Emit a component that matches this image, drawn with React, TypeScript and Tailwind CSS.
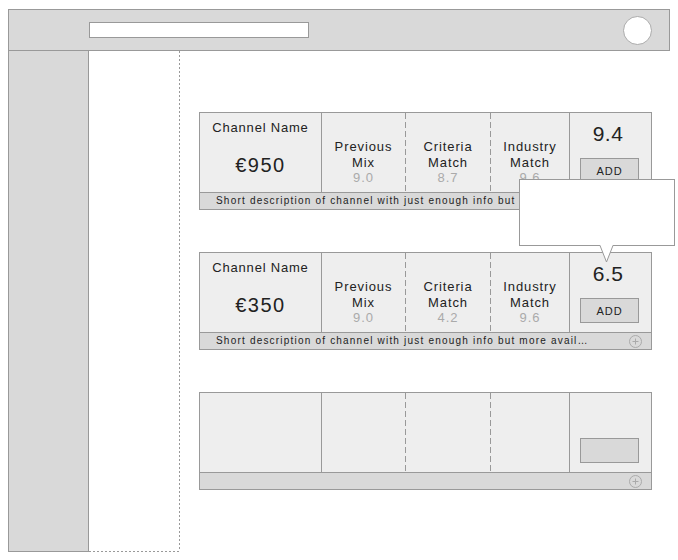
import React from "react";

const FONT = { fontFamily: '"Liberation Sans", Arial, sans-serif' };

function VDash() {
  return (
    <div className="w-px self-stretch bg-[linear-gradient(to_bottom,#999_6px,transparent_6px)] bg-[length:1px_9px]" />
  );
}

function Plus() {
  return (
    <svg width="13" height="13" viewBox="0 0 13 13" className="block">
      <circle cx="6.5" cy="6.5" r="6" fill="none" stroke="#aaa" strokeWidth="1" />
      <path d="M6.5 3.5v6M3.5 6.5h6" stroke="#aaa" strokeWidth="1" />
    </svg>
  );
}

type CardProps = {
  price?: string;
  vals?: [string, string, string];
  score?: string;
  empty?: boolean;
};

function Metric({ top, bottom, value }: { top: string; bottom: string; value: string }) {
  return (
    <div className="flex flex-col items-center pt-[26px] text-[13px] leading-[15.5px] tracking-[0.9px] text-[#222]">
      <span>{top}</span>
      <span>{bottom}</span>
      <span className="text-[#aaa]">{value}</span>
    </div>
  );
}

function Card({ price, vals, score, empty }: CardProps) {
  return (
    <div className="w-[453px] border border-[#999] bg-[#eeeeee]">
      <div className="flex h-[79px]">
        <div className="w-[121px] flex flex-col items-center text-[#222]">
          {!empty && (
            <>
              <span className="mt-[7px] text-[13px] leading-[16px] tracking-[0.8px]">Channel Name</span>
              <span className="mt-[17px] text-[20px] leading-[24px] tracking-[1.5px]">{price}</span>
            </>
          )}
        </div>
        <div className="w-px bg-[#999]" />
        <div className="w-[83px]">
          {!empty && vals && <Metric top="Previous" bottom="Mix" value={vals[0]} />}
        </div>
        <VDash />
        <div className="w-[84px]">
          {!empty && vals && <Metric top="Criteria" bottom="Match" value={vals[1]} />}
        </div>
        <VDash />
        <div className="w-[78px]">
          {!empty && vals && <Metric top="Industry" bottom="Match" value={vals[2]} />}
        </div>
        <div className="w-px bg-[#999]" />
        <div className="w-[81px] flex flex-col">
          <div className="h-[45px] flex justify-center pr-[5px]">
            {!empty && (
              <span className="mt-[9px] text-[21px] leading-[24px] tracking-[0.5px] text-[#222]">{score}</span>
            )}
          </div>
          <div className="ml-[10px] w-[59px] h-[25px] pt-[2px] border border-[#999] bg-[#d9d9d9] flex items-center justify-center text-[11px] tracking-[1px] text-[#222]">
            {!empty && "ADD"}
          </div>
        </div>
      </div>
      <div className="h-[17px] border-t border-[#999] bg-[#d9d9d9] flex items-center pl-[16px] pr-[9px]">
        <span className="text-[10px] leading-[16px] tracking-[1.2px] text-[#222] whitespace-nowrap">
          {!empty && "Short description of channel with just enough info but more avail…"}
        </span>
        <div className="ml-auto">
          <Plus />
        </div>
      </div>
    </div>
  );
}

export default function App() {
  return (
    <div className="relative w-[678px] h-[560px] bg-white pl-[8px] pt-[9px] overflow-hidden" style={FONT}>
      <div className="w-[662px] h-[42px] border border-[#999] bg-[#d9d9d9] flex items-center">
        <div className="ml-[80px] w-[220px] h-[16px] border border-[#999] bg-white" />
        <div className="ml-auto mr-[17px] w-[29px] h-[29px] rounded-full border border-[#aaa] bg-white" />
      </div>
      <div className="flex items-start">
        <div className="-mt-px w-[81px] h-[502px] border border-[#999] bg-[#d9d9d9]" />
        <div className="w-[91px] h-[501px] flex flex-col">
          <div className="flex-1 flex">
            <div className="flex-1" />
            <div className="w-px bg-[linear-gradient(to_bottom,#999_2px,transparent_2px)] bg-[length:1px_4px]" />
          </div>
          <div className="h-px bg-[linear-gradient(to_right,#999_2px,transparent_2px)] bg-[length:4px_1px]" />
        </div>
        <div className="ml-[19px] mt-[61px] flex flex-col gap-[42px]">
          <Card price="€950" vals={["9.0", "8.7", "9.6"]} score="9.4" />
          <Card price="€350" vals={["9.0", "4.2", "9.6"]} score="6.5" />
          <Card empty />
        </div>
      </div>
      <div className="absolute left-[519px] top-[179px] w-[156px] h-[67px] border border-[#999] bg-white" />
      <svg className="absolute left-[598px] top-[245px]" width="18" height="19" viewBox="0 0 18 19">
        <polygon points="2,0 8.5,17 15,0" fill="white" />
        <polyline points="2,0.5 8.5,17 15,0.5" fill="none" stroke="#999" strokeWidth="1" />
      </svg>
    </div>
  );
}
